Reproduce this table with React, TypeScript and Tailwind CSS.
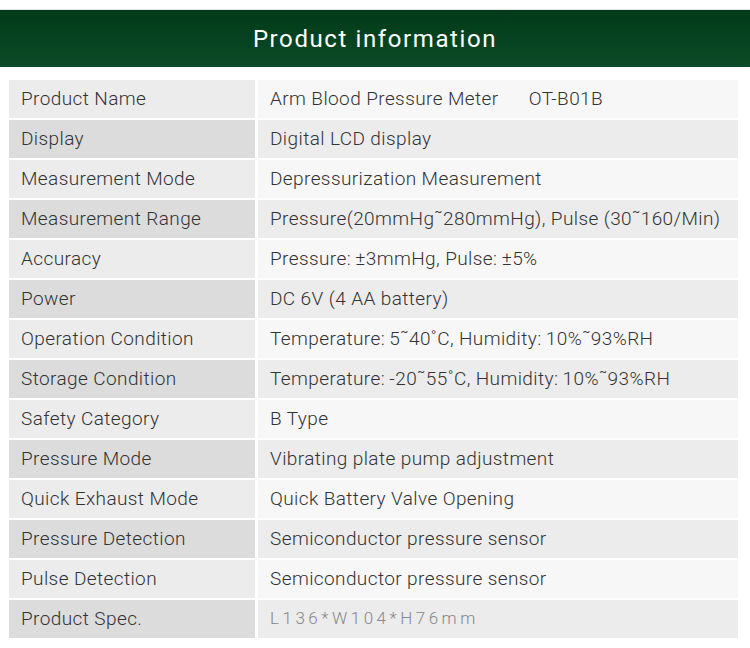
const rows: [string, string][] = [
  ["Product Name", "Arm Blood Pressure Meter\u00a0\u00a0\u00a0\u00a0\u00a0\u00a0OT-B01B"],
  ["Display", "Digital LCD display"],
  ["Measurement Mode", "Depressurization Measurement"],
  ["Measurement Range", "Pressure(20mmHg˜280mmHg), Pulse (30˜160/Min)"],
  ["Accuracy", "Pressure:\u2009±3mmHg, Pulse:\u2009±5%"],
  ["Power", "DC 6V (4 AA battery)"],
  ["Operation Condition", "Temperature:\u20095˜40˚C, Humidity:\u200910%˜93%RH"],
  ["Storage Condition", "Temperature:\u2009-20˜55˚C, Humidity:\u200910%˜93%RH"],
  ["Safety Category", "B Type"],
  ["Pressure Mode", "Vibrating plate pump adjustment"],
  ["Quick Exhaust Mode", "Quick Battery Valve Opening"],
  ["Pressure Detection", "Semiconductor pressure sensor"],
  ["Pulse Detection", "Semiconductor pressure sensor"],
  ["Product Spec.", "L136*W104*H76mm"],
];

export default function App() {
  return (
    <div className="h-[648px] w-[750px] bg-white font-['Roboto','Liberation_Sans',sans-serif]">
      <div className="h-[10px] border-b border-[#e4e4e4]" />
      <div className="flex h-[57px] items-center justify-center bg-gradient-to-b from-[#023a18] to-[#0c4b27]">
        <h1 className="text-[24px] tracking-[1.6px] text-white">Product information</h1>
      </div>
      <div className="ml-[9px] mt-[13px] flex w-[729px] flex-col gap-[2px]">
        {rows.map(([label, value], i) => (
          <div key={label} className="flex h-[38px] gap-[3px] text-[19px] font-light tracking-[0.4px] text-[#333]">
            <div
              className={`flex w-[246px] items-center pl-[12px] ${i % 2 ? "bg-[#dcdcdc]" : "bg-[#ececec]"}`}
            >
              {label}
            </div>
            <div
              className={`flex flex-1 items-center pl-[12px] ${i % 2 ? "bg-[#ececec]" : "bg-[#f7f7f7]"} ${
                label === "Product Spec." ? "text-[17px] tracking-[3.5px] text-[#888]" : ""
              }`}
            >
              {value}
            </div>
          </div>
        ))}
      </div>
    </div>
  );
}
